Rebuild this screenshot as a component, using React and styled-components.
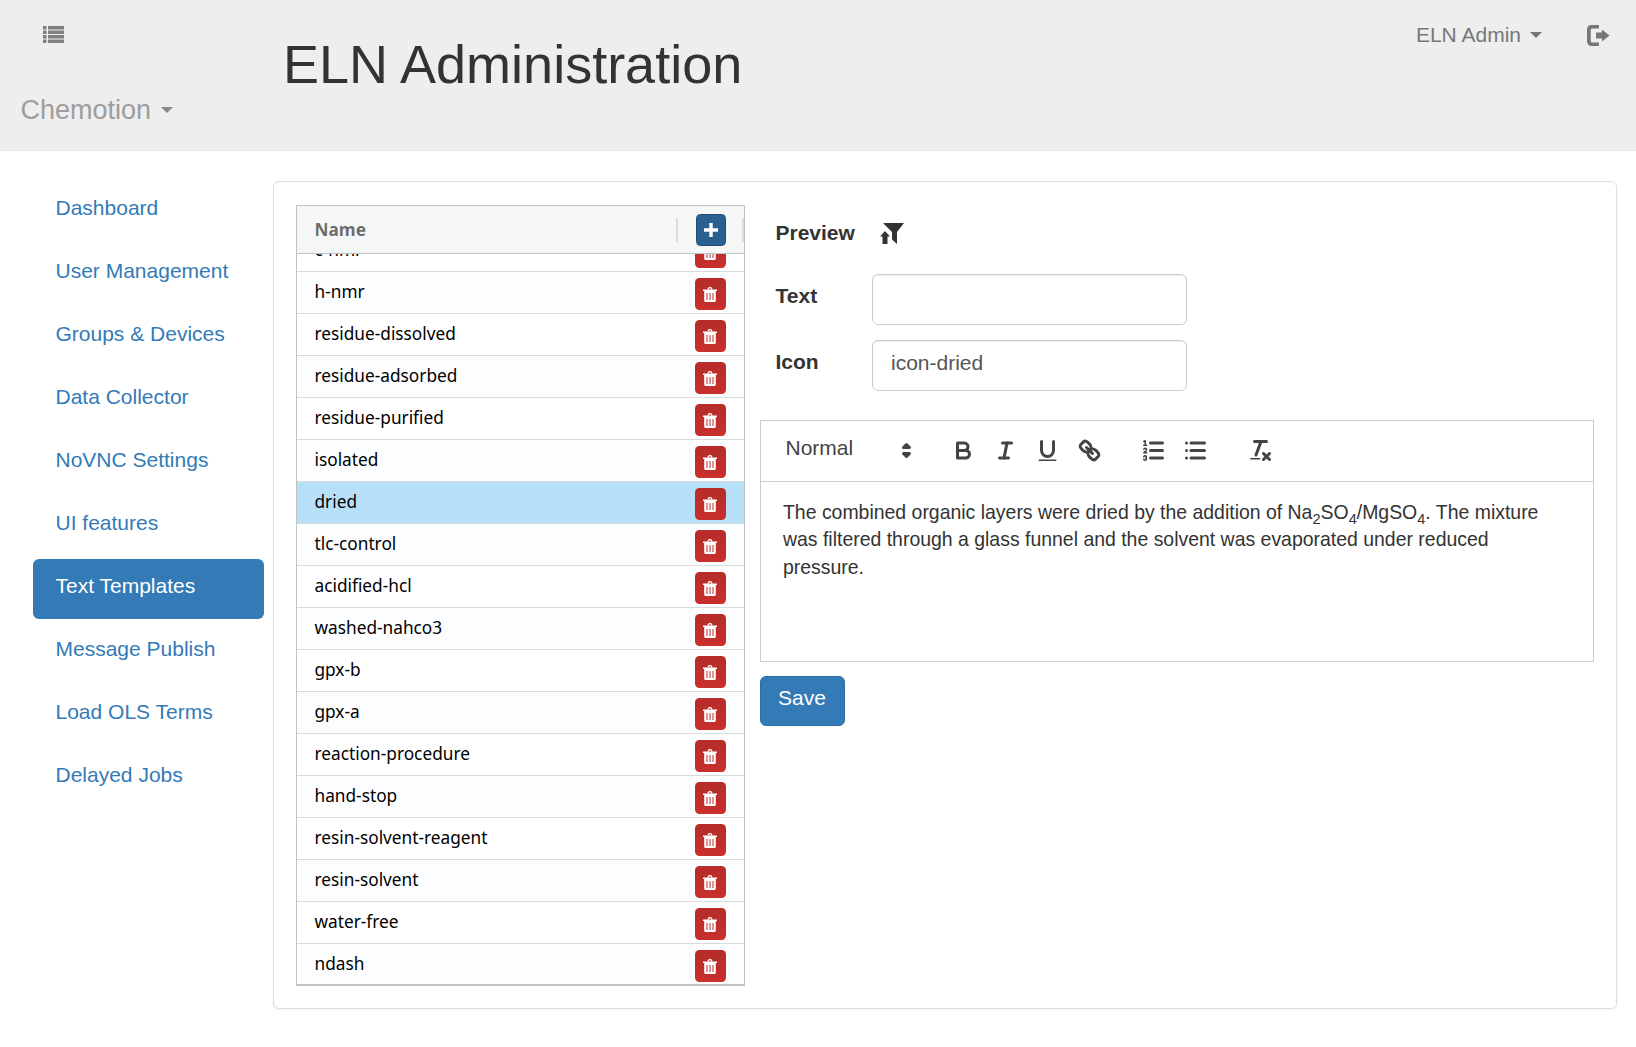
import React from "react";
import styled, { createGlobalStyle } from "styled-components";

const GlobalStyle = createGlobalStyle`
  * { box-sizing: border-box; }
  html, body { margin: 0; padding: 0; background: #fff; }
  body {
    font-family: "Liberation Sans", Arial, sans-serif;
    font-size: 21px;
    line-height: 30px;
    color: #333;
  }
`;

const Page = styled.div`
  width: 1636px;
  height: 1047px;
  overflow: hidden;
`;

const Header = styled.header`
  display: flex;
  height: 151px;
  background: #eee;
  border-bottom: 1px solid #e7e7e7;
`;

const HeaderLeft = styled.div`
  width: 283px;
  display: flex;
  flex-direction: column;
  align-items: flex-start;
`;

const MenuToggle = styled.div`
  margin: 26px 0 0 43px;
  height: 17px;
  color: #808080;
  line-height: 0;
`;

const Brand = styled.div`
  display: flex;
  align-items: center;
  margin: 52px 0 0 20.5px;
  font-size: 27px;
  line-height: 30px;
  color: #9d9d9d;
`;

const Caret = styled.span`
  display: inline-block;
  margin-left: ${(p) => p.$gap || 10}px;
  width: 0;
  height: 0;
  border-top: 6px solid ${(p) => p.$color};
  border-left: 6px solid transparent;
  border-right: 6px solid transparent;
`;

const Title = styled.h1`
  margin: 35px 0 0;
  font-size: 54px;
  font-weight: 400;
  line-height: 59px;
  color: #333;
`;

const HeaderRight = styled.div`
  margin-left: auto;
  display: flex;
  align-items: flex-start;
  padding: 20px 26px 0 0;
  color: #777;
`;

const UserMenu = styled.div`
  display: flex;
  align-items: center;
  margin-right: 45px;
`;

const LogoutIcon = styled.div`
  margin-top: 5px;
  line-height: 0;
`;

const Main = styled.main`
  display: flex;
  align-items: flex-start;
  padding: 29.5px 19px 0 33px;
`;

const SideNav = styled.nav`
  width: 231px;
  margin-right: 9px;
  display: flex;
  flex-direction: column;
  gap: 3px;
`;

const NavLink = styled.a`
  display: block;
  height: 60px;
  padding: 12.5px 22.5px;
  border-radius: 6px;
  color: ${(p) => (p.$active ? "#fff" : "#337ab7")};
  background: ${(p) => (p.$active ? "#337ab7" : "transparent")};
`;

const Panel = styled.section`
  flex: 1;
  height: 828px;
  margin-top: 0.5px;
  display: flex;
  gap: 15px;
  padding: 23px 22.5px 22px 21.5px;
  background: #fff;
  border: 1px solid #ddd;
  border-radius: 6px;
  box-shadow: 0 1px 2px rgba(0, 0, 0, 0.05);
`;

const Grid = styled.div`
  flex: none;
  width: 449px;
  height: 781px;
  display: flex;
  flex-direction: column;
  border: 1px solid #bdc3c7;
  border-bottom-width: 2px;
  font-family: "Noto Sans", sans-serif;
  font-size: 17.25px;
  color: #000;
`;

const GridHead = styled.div`
  flex: none;
  height: 48px;
  display: flex;
  align-items: center;
  padding-left: 18px;
  background: #f5f7f7;
  border-bottom: 1px solid #bdc3c7;
  color: rgba(0, 0, 0, 0.58);
  font-weight: 700;
`;

const HeadName = styled.div`
  flex: 1;
  height: 24px;
  line-height: 24px;
  margin-right: 18px;
  border-right: 2px solid rgba(189, 195, 199, 0.5);
`;

const AddButton = styled.button`
  flex: none;
  width: 30px;
  height: 32px;
  padding: 0;
  display: flex;
  align-items: center;
  justify-content: center;
  background: #286090;
  border: 1px solid #204d74;
  border-radius: 4.5px;
`;

const HeadEdge = styled.div`
  width: 2px;
  height: 24px;
  margin-left: 16px;
  background: rgba(189, 195, 199, 0.5);
`;

const GridBody = styled.div`
  flex: 1;
  overflow: hidden;
`;

const Row = styled.div`
  height: 42px;
  display: flex;
  align-items: center;
  padding: 0 18px;
  border-bottom: 1px solid #d9dcde;
  background: ${(p) => (p.$selected ? "#b8dff8" : p.$odd ? "#fcfdff" : "#fff")};
  &:first-child { margin-top: -24px; }
  &:last-child { border-bottom-color: transparent; }
`;

const RowName = styled.span`
  flex: 1;
  line-height: 24px;
  margin-top: -2px;
`;

const TrashButton = styled.button`
  flex: none;
  width: 31px;
  height: 32px;
  margin-top: 3px;
  padding: 0;
  display: flex;
  align-items: center;
  justify-content: center;
  background: linear-gradient(#b52c28, #c9302c);
  border: 0;
  border-radius: 4.5px;
`;

const Detail = styled.div`
  flex: 1;
  display: flex;
  flex-direction: column;
  align-items: flex-start;
  padding-top: 3px;
`;

const PreviewRow = styled.div`
  height: 50px;
  margin: 0 0 16px 16px;
  display: flex;
  align-items: center;
  gap: 25px;
  font-weight: 700;
`;

const FieldRow = styled.div`
  display: flex;
  margin: 0 0 15px 16px;
`;

const FieldLabel = styled.label`
  width: 96px;
  padding-top: 7px;
  font-weight: 700;
`;

const Input = styled.input`
  width: 315px;
  height: 51px;
  padding: 0 18.5px 6px;
  font: inherit;
  color: #555;
  background: #fff;
  border: 1px solid #ccc;
  border-radius: 6px;
  box-shadow: inset 0 1px 1px rgba(0, 0, 0, 0.075);
  outline: none;
`;

const Editor = styled.div`
  align-self: stretch;
  margin-top: 14px;
  border: 1px solid #ccc;
`;

const Toolbar = styled.div`
  height: 61px;
  display: flex;
  align-items: center;
  padding: 0 12px 2px;
  border-bottom: 1px solid #ccc;
`;

const ToolGroup = styled.div`
  display: flex;
  margin-right: 22.5px;
`;

const Picker = styled.div`
  width: 147px;
  height: 36px;
  margin-right: 22.5px;
  display: flex;
  align-items: center;
  justify-content: space-between;
  padding-left: 13px;
  color: #444;
  line-height: 30px;
`;

const PickerText = styled.span`
  margin-top: -5px;
`;

const ToolButton = styled.div`
  width: 42px;
  height: 36px;
  display: flex;
  align-items: center;
  justify-content: center;
`;

const IconSvg = styled.svg.attrs({ viewBox: "0 0 18 18", width: 27, height: 27 })`
  fill: none;
  stroke: #444;
  stroke-width: 2;
  stroke-linecap: round;
  stroke-linejoin: round;
`;

const Thin = styled.path`
  stroke-width: 1;
`;

const Dot = styled.rect`
  fill: #444;
  stroke: none;
`;

const EditorText = styled.div`
  height: 179px;
  padding: 17px 22.5px;
  font-size: 19.45px;
  line-height: 27.4px;
  color: #333;

  sub {
    font-size: 75%;
    line-height: 0;
  }
`;

const SaveButton = styled.button`
  margin-top: 14px;
  width: 85px;
  height: 50px;
  padding: 0 0 6px;
  font: inherit;
  color: #fff;
  background: #337ab7;
  border: 1px solid #2e6da4;
  border-radius: 6px;
`;

const navItems = [
  "Dashboard",
  "User Management",
  "Groups & Devices",
  "Data Collector",
  "NoVNC Settings",
  "UI features",
  "Text Templates",
  "Message Publish",
  "Load OLS Terms",
  "Delayed Jobs",
];

const templates = [
  "c-nmr",
  "h-nmr",
  "residue-dissolved",
  "residue-adsorbed",
  "residue-purified",
  "isolated",
  "dried",
  "tlc-control",
  "acidified-hcl",
  "washed-nahco3",
  "gpx-b",
  "gpx-a",
  "reaction-procedure",
  "hand-stop",
  "resin-solvent-reagent",
  "resin-solvent",
  "water-free",
  "ndash",
];

function ListIcon() {
  return (
    <svg width="21" height="17" viewBox="0 0 21 17" fill="currentColor">
      {[0, 4.5, 9, 13.5].map((y) => (
        <g key={y}>
          <rect x="0" y={y} width="3.5" height="3.5" />
          <rect x="5" y={y} width="16" height="3.5" />
        </g>
      ))}
    </svg>
  );
}

function LogoutGlyph() {
  return (
    <svg width="23" height="21" viewBox="0 0 23 21" fill="#777">
      <path d="M4.500 0H12v3.500H5.500C4.400 3.500 3.700 4.200 3.700 5.300v10.400c0 1.100.7 1.800 1.800 1.800H12V21H4.500C2 21 0 19 0 16.500v-12C0 2 2 0 4.500 0z" />
      <path d="M15 4.500l7.500 6-7.500 6V13.500H9v-6h6z" />
    </svg>
  );
}

function DriedIcon() {
  return (
    <svg width="25" height="21" viewBox="0 0 25 21" fill="#333">
      <path d="M3 0h21l-7 9v12l-5-4.500V9z" />
      <path d="M5 8l5 5.500H7.500V21h-5v-7.500H0z" />
    </svg>
  );
}

function PlusIcon() {
  return (
    <svg width="14" height="14" viewBox="0 0 14 14" fill="#fff">
      <path d="M5.300 0h3.400v5.300H14v3.400H8.700V14H5.300V8.700H0V5.300h5.300z" />
    </svg>
  );
}

function TrashIcon() {
  return (
    <svg width="14" height="15" viewBox="0 0 14 15" fill="#fff" fillRule="evenodd">
      <path d="M0 2.500h14V4H0z" />
      <path d="M4.300 2.500l.9-1.800Q5.600 0 6.400 0h1.200q.8 0 1.200.7l.9 1.800H8.200L7.600 1.300H6.400L5.800 2.500z" />
      <path d="M1.200 4h11.600v9.500q0 1.500-1.500 1.500H2.700q-1.500 0-1.500-1.500zM3.500 6v7h1V6zm3 0v7h1V6zm3 0v7h1V6z" />
    </svg>
  );
}

function QuillToolbar() {
  return (
    <Toolbar>
      <Picker>
        <PickerText>Normal</PickerText>
        <IconSvg>
          <path d="M7 11l2 2 2-2z" fill="#444" />
          <path d="M7 7l2-2 2 2z" fill="#444" />
        </IconSvg>
      </Picker>
      <ToolGroup>
        <ToolButton>
          <IconSvg>
            <path d="M5 4h4.500A2.500 2.500 0 0 1 12 6.500v0A2.500 2.500 0 0 1 9.500 9H5V4z" />
            <path d="M5 9h5.500a2.500 2.500 0 0 1 2.500 2.500v0a2.500 2.500 0 0 1-2.500 2.500H5V9z" />
          </IconSvg>
        </ToolButton>
        <ToolButton>
          <IconSvg>
            <line x1="7" x2="13" y1="4" y2="4" />
            <line x1="5" x2="11" y1="14" y2="14" />
            <line x1="8" x2="10" y1="14" y2="4" />
          </IconSvg>
        </ToolButton>
        <ToolButton>
          <IconSvg>
            <path d="M5 3v6a4 4 0 0 0 4 4h0a4 4 0 0 0 4-4V3" />
            <Dot x="3" y="15" width="12" height="1" rx="0.5" />
          </IconSvg>
        </ToolButton>
        <ToolButton>
          <IconSvg>
            <line x1="7" x2="11" y1="7" y2="11" />
            <path d="M8.900 4.577a3.476 3.476 0 0 1 .36 4.679 3.476 3.476 0 0 1-4.683-.36C3.185 7.500 2.231 6.014 3.100 5.143L5.143 3.100C6.014 2.231 7.500 3.185 8.900 4.577z" />
            <path d="M13.423 9.100a3.476 3.476 0 0 0-4.679-.36 3.476 3.476 0 0 0 .36 4.679c1.392 1.392 2.876 2.346 3.747 1.475l2.045-2.045c.869-.871-.085-2.357-1.473-3.749z" />
          </IconSvg>
        </ToolButton>
      </ToolGroup>
      <ToolGroup>
        <ToolButton>
          <IconSvg>
            <line x1="7" x2="15" y1="4" y2="4" />
            <line x1="7" x2="15" y1="9" y2="9" />
            <line x1="7" x2="15" y1="14" y2="14" />
            <Thin d="M2.500 5.500h2" />
            <Thin d="M3.500 5.500V2.500l-1 .5" />
            <Thin d="M4.500 10.500h-2c0-.234 1.850-1.076 1.850-2.234A.959.959 0 0 0 2.500 8.156" />
            <Thin d="M2.500 14.846a.959.959 0 0 0 1.850-.109A.7.7 0 0 0 3.750 14a.688.688 0 0 0 .6-.736.959.959 0 0 0-1.850-.109" />
          </IconSvg>
        </ToolButton>
        <ToolButton>
          <IconSvg>
            <line x1="6" x2="15" y1="4" y2="4" />
            <line x1="6" x2="15" y1="9" y2="9" />
            <line x1="6" x2="15" y1="14" y2="14" />
            <line x1="3" x2="3" y1="4" y2="4" />
            <line x1="3" x2="3" y1="9" y2="9" />
            <line x1="3" x2="3" y1="14" y2="14" />
          </IconSvg>
        </ToolButton>
      </ToolGroup>
      <ToolGroup>
        <ToolButton>
          <IconSvg>
            <line x1="5" x2="13" y1="3" y2="3" />
            <line x1="6" x2="9.350" y1="12" y2="3" />
            <line x1="11" x2="15" y1="11" y2="15" />
            <line x1="15" x2="11" y1="11" y2="15" />
            <Dot x="2" y="14" width="7" height="1" rx="0.5" />
          </IconSvg>
        </ToolButton>
      </ToolGroup>
    </Toolbar>
  );
}

export default function App() {
  return (
    <Page>
      <GlobalStyle />
      <Header>
        <HeaderLeft>
          <MenuToggle><ListIcon /></MenuToggle>
          <Brand>Chemotion<Caret $color="#888" /></Brand>
        </HeaderLeft>
        <Title>ELN Administration</Title>
        <HeaderRight>
          <UserMenu>ELN Admin<Caret $color="#777" $gap={9} /></UserMenu>
          <LogoutIcon><LogoutGlyph /></LogoutIcon>
        </HeaderRight>
      </Header>
      <Main>
        <SideNav>
          {navItems.map((item) => (
            <NavLink key={item} $active={item === "Text Templates"}>{item}</NavLink>
          ))}
        </SideNav>
        <Panel>
          <Grid>
            <GridHead>
              <HeadName>Name</HeadName>
              <AddButton><PlusIcon /></AddButton>
              <HeadEdge />
            </GridHead>
            <GridBody>
              {templates.map((name, i) => (
                <Row key={name} $odd={i % 2 === 1} $selected={name === "dried"}>
                  <RowName>{name}</RowName>
                  <TrashButton><TrashIcon /></TrashButton>
                </Row>
              ))}
            </GridBody>
          </Grid>
          <Detail>
            <PreviewRow>Preview <DriedIcon /></PreviewRow>
            <FieldRow>
              <FieldLabel>Text</FieldLabel>
              <Input readOnly defaultValue="" />
            </FieldRow>
            <FieldRow>
              <FieldLabel>Icon</FieldLabel>
              <Input readOnly defaultValue="icon-dried" />
            </FieldRow>
            <Editor>
              <QuillToolbar />
              <EditorText>
                The combined organic layers were dried by the addition of Na<sub>2</sub>SO<sub>4</sub>/MgSO<sub>4</sub>. The mixture was filtered through a glass funnel and the solvent was evaporated under reduced pressure.
              </EditorText>
            </Editor>
            <SaveButton>Save</SaveButton>
          </Detail>
        </Panel>
      </Main>
    </Page>
  );
}
